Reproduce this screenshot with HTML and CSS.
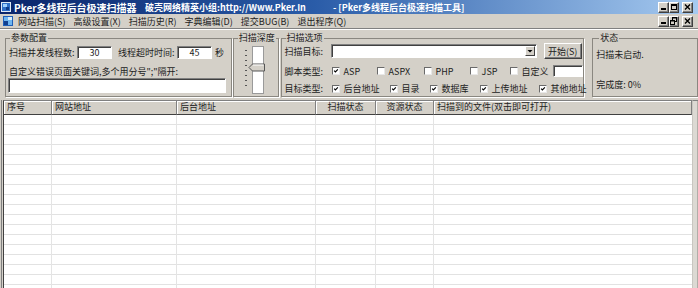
FILE: index.html
```html
<!DOCTYPE html>
<html>
<head>
<meta charset="utf-8">
<link rel="stylesheet" href="styles.css">
</head>
<body>
<div class="titlebar">
  <svg class="appicon" viewBox="0 0 10 10"><rect x="0" y="0" width="10" height="10" fill="#dfe9f5"/><rect x="1" y="1" width="8" height="8" fill="#2f6fc9"/><rect x="2" y="2" width="4" height="3" fill="#9fd0ff"/><rect x="5" y="5" width="3" height="3" fill="#0d3a8a"/></svg>
  <span class="t1">Pker多线程后台极速扫描器</span>
  <span class="t2">破壳网络精英小组:http://Www.Pker.In</span>
  <span class="t3">- [Pker多线程后台极速扫描工具]</span>
  <div class="wbtns">
    <div class="wbtn"><svg viewBox="0 0 9 8"><rect x="2" y="5" width="5" height="2" fill="#000"/></svg></div>
    <div class="wbtn w10"><svg viewBox="0 0 8 8"><rect x="1.5" y="1.5" width="5" height="5" fill="none" stroke="#000" stroke-width="1"/><rect x="1" y="1" width="6" height="2" fill="#000"/></svg></div>
    <div class="wbtn close"><svg viewBox="0 0 9 8"><path d="M2 1.5 L7 6.5 M7 1.5 L2 6.5" stroke="#000" stroke-width="1.4"/></svg></div>
  </div>
</div>
<div class="menubar">
  <svg class="menuicon" viewBox="0 0 10 10"><rect x="0" y="0" width="10" height="10" fill="#1f5fb8"/><rect x="1" y="1" width="8" height="8" fill="#6fb6f0"/><rect x="1" y="5" width="4" height="4" fill="#12408f"/><rect x="5" y="1" width="4" height="3" fill="#d8eefc"/></svg>
  <span class="mi">网站扫描(S)</span>
  <span class="mi">高级设置(X)</span>
  <span class="mi">扫描历史(R)</span>
  <span class="mi">字典编辑(D)</span>
  <span class="mi">提交BUG(B)</span>
  <span class="mi">退出程序(Q)</span>
  <div class="wbtns">
    <div class="wbtn"><svg viewBox="0 0 9 8"><rect x="2" y="5" width="5" height="2" fill="#000"/></svg></div>
    <div class="wbtn w10"><svg viewBox="0 0 8 8"><rect x="2.5" y="0.5" width="4" height="4" fill="none" stroke="#000"/><rect x="2" y="0" width="5" height="1.5" fill="#000"/><rect x="0.5" y="3.5" width="4" height="4" fill="#d4d0c8" stroke="#000"/><rect x="0" y="3" width="5" height="1.5" fill="#000"/></svg></div>
    <div class="wbtn close"><svg viewBox="0 0 9 8"><path d="M2 1.5 L7 6.5 M7 1.5 L2 6.5" stroke="#000" stroke-width="1.4"/></svg></div>
  </div>
</div>
<div class="sep"></div>
<div class="panels">
  <fieldset class="grp g1">
    <legend>参数配置</legend>
    <div class="r1">
      <span class="l-threads">扫描并发线程数:</span>
      <span class="edit num">30</span>
      <span class="l-timeout">线程超时时间:</span>
      <span class="edit num">45</span>
      <span class="l-sec">秒</span>
    </div>
    <div class="lbl2">自定义错误页面关键词,多个用分号";"隔开:</div>
    <div class="edit wide"></div>
  </fieldset>
  <fieldset class="grp g2">
    <legend>扫描深度</legend>
    <svg class="track" viewBox="0 0 24 50" width="24" height="50">
      <g fill="#555">
        <rect x="2" y="5" width="2" height="1"/><rect x="2" y="10" width="2" height="1"/><rect x="2" y="15" width="2" height="1"/><rect x="2" y="20" width="2" height="1"/><rect x="2" y="25" width="2" height="1"/><rect x="2" y="30" width="2" height="1"/><rect x="2" y="35" width="2" height="1"/><rect x="2" y="40" width="2" height="1"/>
      </g>
      <rect x="9.5" y="1.5" width="11" height="47" fill="#fff" stroke="#9a9a9a"/>
      <polygon points="6,22.5 9.5,19 21.5,19 21.5,26 9.5,26" fill="#d4d0c8" stroke="#555"/>
      <line x1="10" y1="20" x2="20.5" y2="20" stroke="#fff"/>
    </svg>
  </fieldset>
  <fieldset class="grp g3">
    <legend>扫描选项</legend>
    <div class="orow o1">
      <span class="olbl">扫描目标:</span>
      <div class="edit combo"><span class="dd"><svg viewBox="0 0 8 8"><polygon points="1.5,3 6.5,3 4,5.5" fill="#000"/></svg></span></div>
      <div class="btn">开始(S)</div>
    </div>
    <div class="orow o2">
      <span class="olbl">脚本类型:</span>
      <span class="ck w45"><span class="box on"><svg viewBox="0 0 8 8"><path d="M1.5 3.5 L3.2 5.3 L6.5 1.8" fill="none" stroke="#000" stroke-width="1.5"/></svg></span>ASP</span>
      <span class="ck w47"><span class="box"></span>ASPX</span>
      <span class="ck w46"><span class="box"></span>PHP</span>
      <span class="ck w40"><span class="box"></span>JSP</span>
      <span class="ck"><span class="box"></span>自定义</span>
      <span class="edit custom"></span>
    </div>
    <div class="orow o3">
      <span class="olbl">目标类型:</span>
      <span class="ck w58"><span class="box on"><svg viewBox="0 0 8 8"><path d="M1.5 3.5 L3.2 5.3 L6.5 1.8" fill="none" stroke="#000" stroke-width="1.5"/></svg></span>后台地址</span>
      <span class="ck w40"><span class="box on"><svg viewBox="0 0 8 8"><path d="M1.5 3.5 L3.2 5.3 L6.5 1.8" fill="none" stroke="#000" stroke-width="1.5"/></svg></span>目录</span>
      <span class="ck w50"><span class="box on"><svg viewBox="0 0 8 8"><path d="M1.5 3.5 L3.2 5.3 L6.5 1.8" fill="none" stroke="#000" stroke-width="1.5"/></svg></span>数据库</span>
      <span class="ck w59"><span class="box on"><svg viewBox="0 0 8 8"><path d="M1.5 3.5 L3.2 5.3 L6.5 1.8" fill="none" stroke="#000" stroke-width="1.5"/></svg></span>上传地址</span>
      <span class="ck"><span class="box on"><svg viewBox="0 0 8 8"><path d="M1.5 3.5 L3.2 5.3 L6.5 1.8" fill="none" stroke="#000" stroke-width="1.5"/></svg></span>其他地址</span>
    </div>
  </fieldset>
  <fieldset class="grp g4">
    <legend>状态</legend>
    <div class="st1">扫描未启动.</div>
    <div class="st2">完成度: 0%</div>
  </fieldset>
</div>
<div class="list">
  <div class="lv">
    <div class="lv-head">
      <div class="hc c1">序号</div>
      <div class="hc c2">网站地址</div>
      <div class="hc c3">后台地址</div>
      <div class="hc c4 center">扫描状态</div>
      <div class="hc c5 center">资源状态</div>
      <div class="hc c6">扫描到的文件(双击即可打开)</div>
    </div>
    <div class="lv-body">
      <div class="bc c1"></div>
      <div class="bc c2"></div>
      <div class="bc c3"></div>
      <div class="bc c4"></div>
      <div class="bc c5"></div>
      <div class="bc c6"></div>
    </div>
  </div>
  <div class="vedge"></div>
</div>
</body>
</html>
```

FILE: styles.css
```css
* { box-sizing: border-box; }
html, body { margin: 0; padding: 0; }
body {
  width: 698px;
  height: 288px;
  overflow: hidden;
  background: #d4d0c8;
  font-family: "Noto Sans CJK SC", "Noto Sans", sans-serif;
  font-size: 9px;
  line-height: 11px;
  color: #222;
}

/* title bar */
.titlebar {
  height: 14px;
  display: flex;
  align-items: center;
  white-space: nowrap;
  color: #fff;
  font-weight: bold;
  background: linear-gradient(to right, #0a246a 0%, #2a5ca8 45%, #a6caf0 100%);
}
.appicon { width: 10px; height: 10px; margin-left: 1px; flex: none; }
.t1 { margin-left: 3px; width: 131px; font-size: 10px; flex: none; }
.t2 { width: 188px; flex: none; }
.t3 { flex: none; }

.wbtns { margin-left: auto; margin-right: 5px; display: flex; }
.wbtn {
  width: 11px;
  height: 11px;
  background: #d4d0c8;
  border: 1px solid;
  border-color: #fff #404040 #404040 #fff;
  box-shadow: inset -1px -1px 0 #808080;
  display: flex;
}
.wbtn svg { width: 9px; height: 8px; }
.wbtn.w10 { width: 10px; }
.wbtn.w10 svg { width: 8px; }
.wbtn.close { margin-left: 3px; }

/* menu */
.menubar {
  height: 14px;
  display: flex;
  align-items: center;
  white-space: nowrap;
}
.menuicon { width: 10px; height: 10px; margin-left: 3px; margin-right: 2px; flex: none; }
.mi { margin-left: 3px; margin-right: 5px; }
.sep { height: 2px; border-top: 1px solid #808080; border-bottom: 1px solid #fff; }

/* panels */
.panels {
  height: 70px;
  display: flex;
  align-items: flex-start;
  padding: 3px 0 0 5px;
}
.grp {
  margin: 0;
  padding: 0;
  min-width: 0;
  height: 64px;
  border: 1px solid #8a8780;
  box-shadow: 1px 1px 0 #fff;
}
.grp legend {
  padding: 0 1px;
  margin-left: 4px;
  line-height: 10px;
  font-size: 9px;
}
.g1 { width: 227px; }
.g2 { width: 46px; margin-left: 1px; }
.g3 { width: 304px; margin-left: 2px; }
.g4 { width: 106px; margin-left: 8px; padding-left: 2px; }

.edit {
  background: #fff;
  border: 1px solid;
  border-color: #808080 #fff #fff #808080;
  box-shadow: inset 1px 1px 0 #404040;
  display: flex;
  align-items: center;
  justify-content: center;
}

.r1 { display: flex; align-items: center; height: 13px; margin-top: 3px; padding-left: 3px; white-space: nowrap; }
.l-threads { width: 68px; }
.edit.num { width: 35px; height: 13px; }
.l-timeout { margin-left: 6px; width: 59px; }
.l-sec { margin-left: 3px; }
.lbl2 { margin-top: 7px; padding-left: 3px; white-space: nowrap; }
.edit.wide { margin: 1px 0 0 2px; width: 218px; height: 15px; }

.track { display: block; margin: 2px 0 0 9px; }

.orow { display: flex; align-items: center; padding-left: 3px; white-space: nowrap; }
.o1 { height: 16px; }
.o2 { height: 18px; margin-top: 3px; }
.o3 { height: 17px; }
.olbl { width: 46px; flex: none; }
.edit.combo { width: 206px; height: 14px; justify-content: flex-end; padding-right: 1px; }
.dd {
  width: 10px;
  height: 10px;
  background: #d4d0c8;
  border: 1px solid;
  border-color: #fff #404040 #404040 #fff;
  display: flex;
}
.dd svg { width: 8px; height: 8px; }
.btn {
  margin-left: 7px;
  width: 38px;
  height: 16px;
  background: #d4d0c8;
  border: 1px solid;
  border-color: #fff #404040 #404040 #fff;
  box-shadow: inset -1px -1px 0 #808080;
  display: flex;
  align-items: center;
  justify-content: center;
}
.ck { display: flex; align-items: center; flex: none; }
.w40 { width: 40px; }
.w45 { width: 45px; }
.w46 { width: 46px; }
.w47 { width: 47px; }
.w50 { width: 50px; }
.w58 { width: 58px; }
.w59 { width: 59px; }
.box {
  width: 8px;
  height: 8px;
  margin: 0 4px 0 1px;
  background: #fff;
  border: 1px solid;
  border-color: #6a6a6a #e8e8e8 #e8e8e8 #6a6a6a;
  display: flex;
  flex: none;
}
.box svg { width: 6px; height: 6px; }
.edit.custom { width: 33px; height: 12px; margin-left: 4px; }

.st1 { margin-top: 6px; padding-left: 1px; }
.st2 { margin-top: 19px; padding-left: 1px; }

/* list view */
.list {
  height: 188px;
  display: flex;
  margin-left: 1px;
  border-left: 1px solid #808080;
  padding-left: 1px;
}
.lv {
  width: 689px;
  flex: none;
  border-top: 1px solid #808080;
  border-left: 1px solid #404040;
  display: flex;
  flex-direction: column;
  background: #fff;
}
.lv-head { display: flex; height: 14px; flex: none; }
.hc {
  height: 14px;
  padding-left: 3px;
  background: #d4d0c8;
  border-right: 1px solid #808080;
  border-bottom: 1px solid #404040;
  box-shadow: inset 1px 1px 0 #fff;
  line-height: 12px;
  white-space: nowrap;
}
.hc.center { text-align: center; padding-left: 0; }
.c1 { width: 48px; }
.c2 { width: 125px; }
.c3 { width: 139px; }
.c4 { width: 60px; }
.c5 { width: 58px; }
.c6 { flex: 1; }
.lv-body { display: flex; flex: 1; }
.bc {
  border-right: 1px solid #e4e4e4;
  background: repeating-linear-gradient(to bottom, #fff 0, #fff 9px, #e2e2e2 9px, #e2e2e2 10px);
}
.bc.c6 { border-right: none; }
.vedge {
  flex: 1;
  border-left: 1px solid #c8c6c0;
  border-top: 1px solid #808080;
  background: #dcd9d3;
  box-shadow: inset -1px 0 0 #b0aea8;
}
```
